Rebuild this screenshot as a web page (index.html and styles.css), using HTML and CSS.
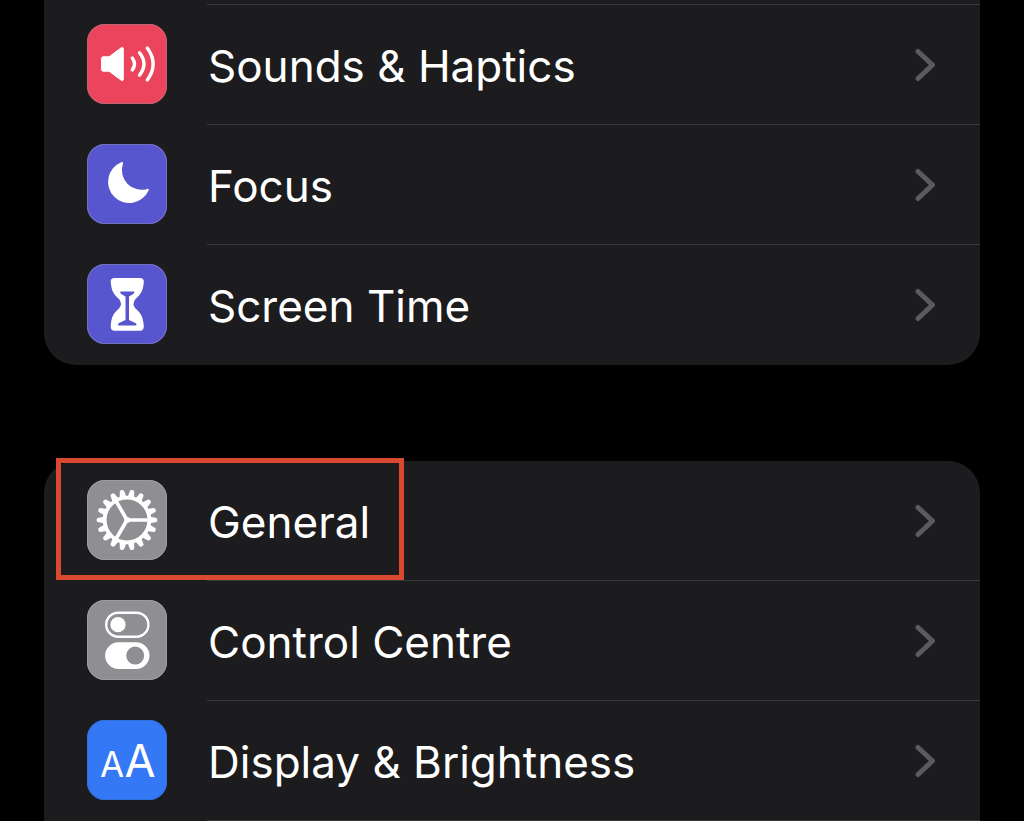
FILE: index.html
```html
<!DOCTYPE html>
<html lang="en-GB">
<head>
<meta charset="utf-8">
<meta name="viewport" content="width=device-width, initial-scale=1">
<title>Settings</title>
<link rel="stylesheet" href="styles.css">
</head>
<body>
<main class="settings">
  <nav class="group group-continued" aria-label="Notifications and focus">
    <a class="row" href="#sounds">
      <svg class="icon icon-red" viewBox="0 0 80 80" aria-hidden="true">
        <path class="fill join" d="M14.500 34.500q0-1.700 1.700-1.700h5.800L34 23.900q2.300-1.400 2.300 1v30.200q0 2.400-2.300 1L22 47.200H16.200q-1.700 0-1.700-1.700z"/>
        <path class="line" stroke-width="3.400" d="M45.300 34Q49.700 40 45.300 46M52.500 28.800Q61.500 40 52.500 51.200M60.300 24Q72 40 60.300 56"/>
      </svg>
      <span class="content"><span class="label">Sounds &amp; Haptics</span>
        <svg class="chevron" viewBox="0 0 22 36" aria-hidden="true"><path d="M3 4.500 17.500 18 3 31.500"/></svg></span>
    </a>
    <a class="row" href="#focus">
      <svg class="icon icon-indigo" viewBox="0 0 80 80" aria-hidden="true">
        <path class="fill" d="M34.300 18.200A21.200 21.200 0 1 0 61.600 46.600Q62.600 44.200 60.300 44.900A19.700 19.700 0 0 1 36 19.500Q36.300 17.500 34.300 18.200z"/>
      </svg>
      <span class="content"><span class="label">Focus</span>
        <svg class="chevron" viewBox="0 0 22 36" aria-hidden="true"><path d="M3 4.500 17.500 18 3 31.500"/></svg></span>
    </a>
    <a class="row" href="#screen-time">
      <svg class="icon icon-indigo" viewBox="0 0 80 80" aria-hidden="true">
        <path class="fill" d="M27.500 14h25.500q4 0 3.800 4C56 28 53 31 48.500 35Q44.500 40 48.500 44.500C53 49 56 51 56.800 62q.2 4.700-3.800 4.700H27.500q-4 0-3.800-4.700C24.500 51 27.500 49 32 44.500Q36 40 32 35C27.500 31 24.500 28 23.700 18q-.2-4 3.800-4z"/>
        <path class="cut" d="M33.500 27.600h13.500q1 1.400-.7 2.300L42 32.500V56l6.500 3q1.500 1 .8 2.400H31.200q-.7-1.400.8-2.400l6.500-3V32.500L34.200 29.900Q32.500 29 33.500 27.600z"/>
      </svg>
      <span class="content"><span class="label">Screen Time</span>
        <svg class="chevron" viewBox="0 0 22 36" aria-hidden="true"><path d="M3 4.500 17.500 18 3 31.500"/></svg></span>
    </a>
  </nav>

  <nav class="group" aria-label="General settings">
    <a class="row row-marked" href="#general">
      <svg class="icon icon-gray" viewBox="0 0 80 80" aria-hidden="true">
        <defs><path id="tooth" d="M62.500 36.500 69.300 37.900Q70.400 38.200 70.400 40T69.300 42.100L62.500 43.500z"/></defs>
        <g class="fill">
          <use href="#tooth"/>
          <use href="#tooth" transform="rotate(20 40 40)"/>
          <use href="#tooth" transform="rotate(40 40 40)"/>
          <use href="#tooth" transform="rotate(60 40 40)"/>
          <use href="#tooth" transform="rotate(80 40 40)"/>
          <use href="#tooth" transform="rotate(100 40 40)"/>
          <use href="#tooth" transform="rotate(120 40 40)"/>
          <use href="#tooth" transform="rotate(140 40 40)"/>
          <use href="#tooth" transform="rotate(160 40 40)"/>
          <use href="#tooth" transform="rotate(180 40 40)"/>
          <use href="#tooth" transform="rotate(200 40 40)"/>
          <use href="#tooth" transform="rotate(220 40 40)"/>
          <use href="#tooth" transform="rotate(240 40 40)"/>
          <use href="#tooth" transform="rotate(260 40 40)"/>
          <use href="#tooth" transform="rotate(280 40 40)"/>
          <use href="#tooth" transform="rotate(300 40 40)"/>
          <use href="#tooth" transform="rotate(320 40 40)"/>
          <use href="#tooth" transform="rotate(340 40 40)"/>
        </g>
        <circle class="line" cx="40" cy="40" r="22.300" stroke-width="3.800"/>
        <path class="line" stroke-width="3.600" d="M40 40H62M40 40 29 21M40 40 29 59"/>
        <circle class="fill" cx="40" cy="40" r="3"/>
      </svg>
      <span class="content"><span class="label">General</span>
        <svg class="chevron" viewBox="0 0 22 36" aria-hidden="true"><path d="M3 4.500 17.500 18 3 31.500"/></svg></span>
    </a>
    <a class="row" href="#control-centre">
      <svg class="icon icon-gray" viewBox="0 0 80 80" aria-hidden="true">
        <rect class="line" x="19.200" y="12.700" width="42.200" height="24" rx="12" stroke-width="2.400"/>
        <circle class="fill" cx="31" cy="24.700" r="7.600"/>
        <path class="fill" fill-rule="evenodd" d="M31.400 42.300h17.800a13.300 13.300 0 0 1 0 26.600H31.400a13.300 13.300 0 0 1 0-26.600zM48.200 46.600a9 9 0 1 0 0 18 9 9 0 0 0 0-18z"/>
      </svg>
      <span class="content"><span class="label">Control Centre</span>
        <svg class="chevron" viewBox="0 0 22 36" aria-hidden="true"><path d="M3 4.500 17.500 18 3 31.500"/></svg></span>
    </a>
    <a class="row" href="#display">
      <svg class="icon icon-blue" viewBox="0 0 80 80" aria-hidden="true">
        <text class="letter letter-small" x="25" y="57">A</text>
        <text class="letter letter-large" x="53" y="57">A</text>
      </svg>
      <span class="content"><span class="label">Display &amp; Brightness</span>
        <svg class="chevron" viewBox="0 0 22 36" aria-hidden="true"><path d="M3 4.500 17.500 18 3 31.500"/></svg></span>
    </a>
  </nav>
</main>
</body>
</html>
```

FILE: styles.css
```css
*,
*::after {
  box-sizing: border-box;
}

body {
  margin: 0;
  background: #000;
  color: #fff;
  font-family: Inter, "Liberation Sans", sans-serif;
}

.settings {
  display: flex;
  flex-direction: column;
  gap: 96px;
  padding: 0 44px;
}

.group {
  background: #1c1c1e;
  border-radius: 32px;
}

.group-continued {
  padding-top: 5px;
  border-top-left-radius: 0;
  border-top-right-radius: 0;
  background: linear-gradient(#37373a, #37373a) 163px 4px / 100% 1px no-repeat #1c1c1e;
}

.group:last-child {
  border-bottom-left-radius: 0;
  border-bottom-right-radius: 0;
}

.row {
  position: relative;
  display: flex;
  gap: 40px;
  height: 120px;
  padding-left: 43px;
  color: inherit;
  text-decoration: none;
}

.content {
  flex: 1;
  display: flex;
  align-items: center;
  justify-content: space-between;
  padding: 0 43px 0 1px;
  border-bottom: 1px solid #37373a;
}

.group-continued .row:last-child .content {
  border-bottom-color: transparent;
}

.label {
  font-size: 44px;
  line-height: 56px;
  padding-top: 2px;
  white-space: nowrap;
}

.icon {
  flex: none;
  width: 80px;
  height: 80px;
  margin-top: 19px;
  border-radius: 18px;
}

.icon-red {
  background: #eb445c;
  box-shadow: inset 0 0 0 1px #bd6574;
}

.icon-indigo {
  background: #5856ce;
  box-shadow: inset 0 0 0 1px #7371bd;
}

.icon-gray {
  background: #8e8e93;
  box-shadow: inset 0 0 0 1px #9c9ca0;
}

.icon-blue {
  background: #3478f6;
  box-shadow: inset 0 0 0 1px #336fdc;
}

.fill {
  fill: #fff;
}

.join {
  stroke: #fff;
  stroke-width: 1;
  stroke-linejoin: round;
}

.line {
  fill: none;
  stroke: #fff;
  stroke-linecap: round;
}

.cut {
  fill: #5856ce;
}

.letter {
  fill: #fff;
  text-anchor: middle;
}

.letter-small {
  font-size: 35px;
}

.letter-large {
  font-size: 45px;
}

.chevron {
  width: 22px;
  height: 36px;
  fill: none;
  stroke: #5b5b5f;
  stroke-width: 5;
  stroke-linecap: round;
  stroke-linejoin: round;
}

.row-marked::after {
  content: "";
  position: absolute;
  top: -3px;
  left: 12px;
  width: 348px;
  height: 122px;
  border: 5px solid #d9482f;
  pointer-events: none;
}
```
